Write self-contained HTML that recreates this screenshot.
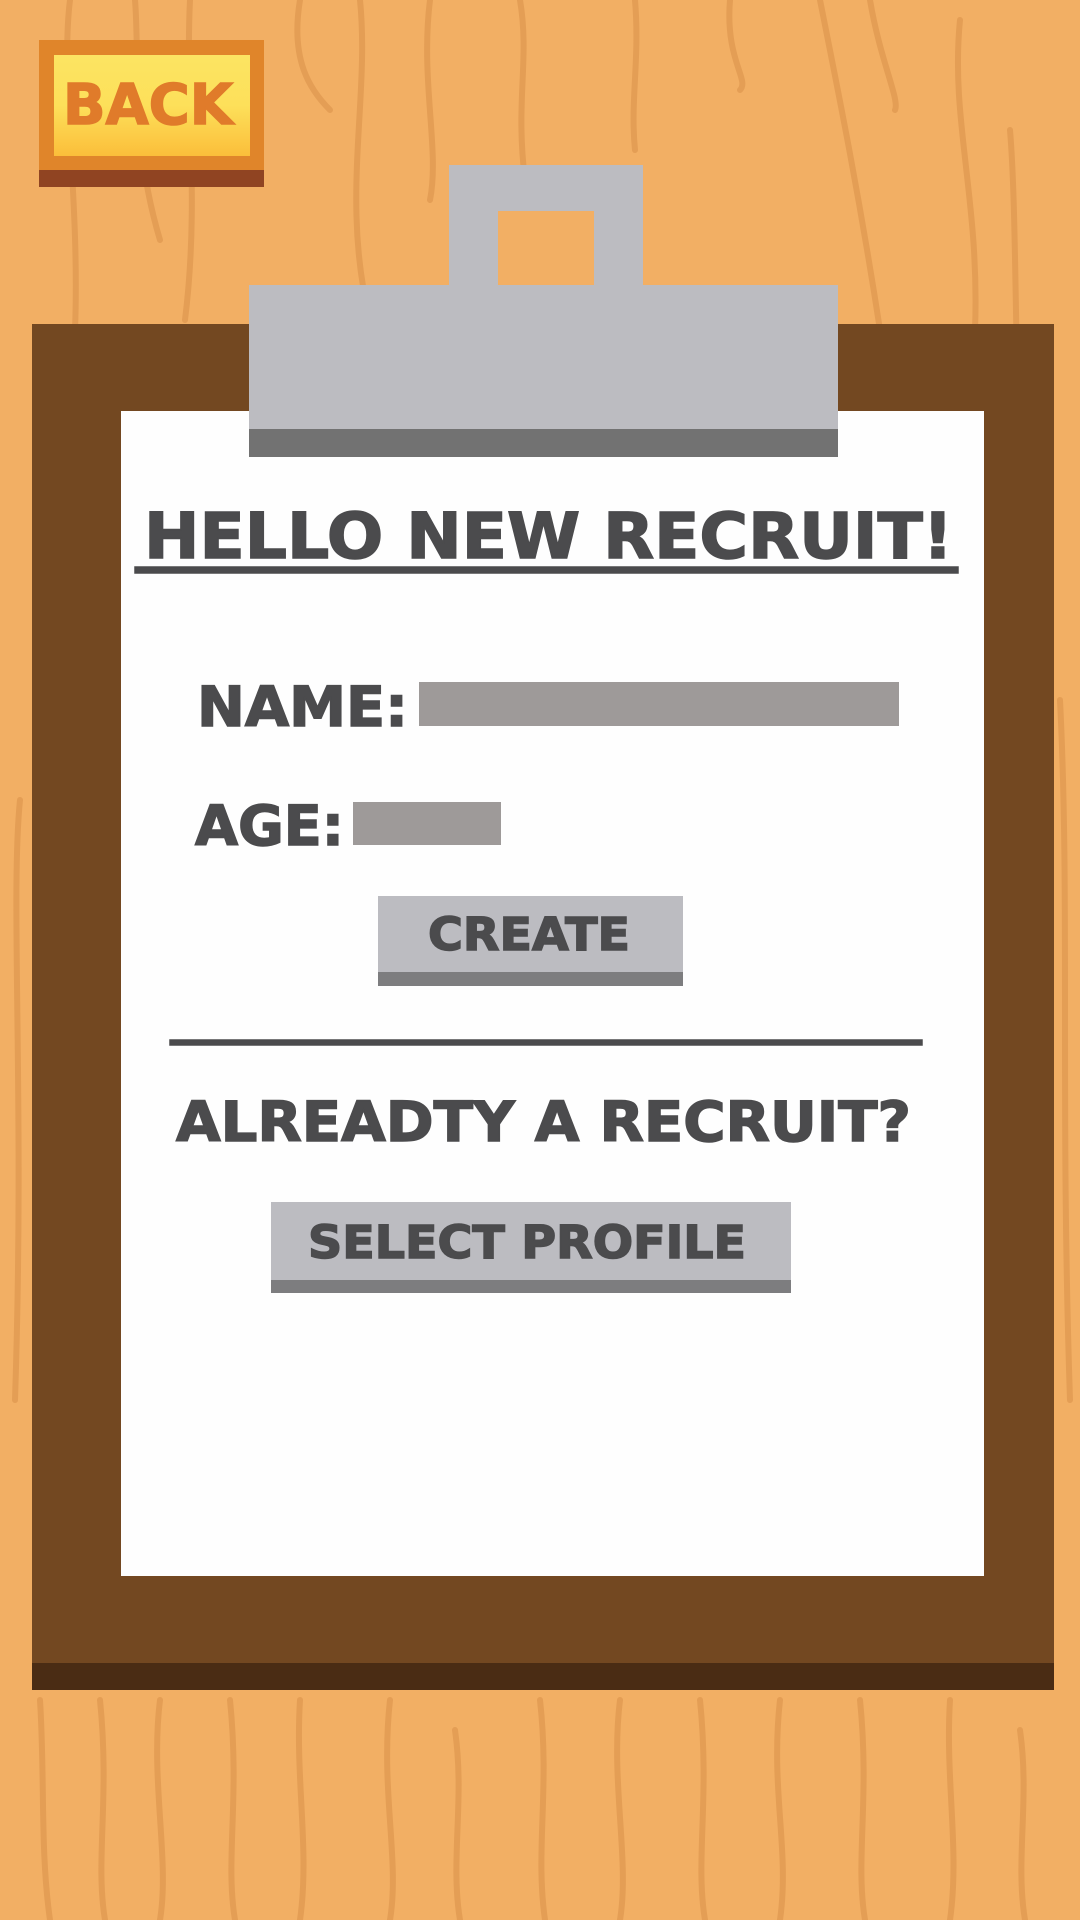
<!DOCTYPE html>
<html><head><meta charset="utf-8"><style>
html,body{margin:0;padding:0;width:1080px;height:1920px;overflow:hidden;background:#F2AF64}
svg{display:block}
text{font-family:"DejaVu Sans","Liberation Sans",sans-serif;font-weight:bold}
</style></head><body>
<svg width="1080" height="1920" viewBox="0 0 1080 1920" xmlns="http://www.w3.org/2000/svg">
<defs><linearGradient id="g" x1="0" y1="0" x2="0" y2="1"><stop offset="0" stop-color="#FCE462"/><stop offset="0.5" stop-color="#FDE05A"/><stop offset="1" stop-color="#FBBE3A"/></linearGradient></defs>
<rect width="1080" height="1920" fill="#F2AF64"/>
<g fill="none" stroke="#E49E55" stroke-width="6" stroke-linecap="round">
<path d="M70 0 C60 80 80 200 75 330"/><path d="M135 0 C140 60 130 140 160 240"/><path d="M190 0 C185 100 200 200 185 320"/>
<path d="M300 0 C290 60 310 90 330 110"/><path d="M360 0 C370 100 340 200 370 320"/><path d="M430 0 C420 80 440 150 430 200"/>
<path d="M520 0 C530 60 515 100 525 180"/><path d="M635 0 C640 60 630 100 635 150"/><path d="M730 0 C725 60 750 80 740 90"/>
<path d="M820 0 C840 100 860 200 880 330"/><path d="M870 0 C880 60 900 100 895 110"/><path d="M960 20 C950 120 980 200 975 330"/>
<path d="M1010 130 C1020 250 1010 500 1040 700"/><path d="M20 800 C10 900 25 1100 15 1400"/><path d="M1060 700 C1070 900 1060 1100 1070 1400"/>
<path d="M40 1700 C45 1780 40 1850 50 1920"/><path d="M100 1700 C110 1800 95 1860 105 1920"/><path d="M160 1700 C150 1780 170 1860 160 1920"/>
<path d="M230 1700 C240 1800 225 1860 235 1920"/><path d="M300 1700 C295 1780 310 1850 300 1920"/><path d="M390 1700 C380 1790 400 1860 390 1920"/>
<path d="M455 1730 C465 1800 450 1860 460 1920"/><path d="M540 1700 C550 1790 535 1850 545 1920"/><path d="M620 1700 C610 1780 630 1860 620 1920"/>
<path d="M700 1700 C710 1800 695 1860 705 1920"/><path d="M780 1700 C770 1790 790 1850 780 1920"/><path d="M860 1700 C870 1800 855 1860 865 1920"/>
<path d="M950 1700 C945 1780 960 1850 950 1920"/><path d="M1020 1730 C1030 1800 1015 1860 1025 1920"/>
</g>
<rect x="39" y="40" width="225" height="147" fill="#E0852A"/>
<rect x="39" y="170" width="225" height="17" fill="#904422"/>
<rect x="54" y="55" width="196" height="101" fill="url(#g)"/>
<text x="63" y="124" font-size="56" fill="#E07B2A" stroke="#E07B2A" stroke-width="1.5" textLength="170" lengthAdjust="spacingAndGlyphs">BACK</text>
<rect x="32" y="324" width="1022" height="1366" fill="#734821"/>
<rect x="32" y="1663" width="1022" height="27" fill="#4A2C14"/>
<rect x="121" y="411" width="863" height="1165" fill="#FEFEFE"/>
<path d="M449 165 H643 V285 H594 V211 H498 V285 H449 Z" fill="#BCBCC1"/>
<rect x="249" y="285" width="589" height="172" fill="#BCBCC1"/>
<rect x="249" y="429" width="589" height="28" fill="#727272"/>
<g fill="#4B4B4D" stroke="#4B4B4D" stroke-width="1.5">
<text x="144" y="558" font-size="63" textLength="809" lengthAdjust="spacingAndGlyphs">HELLO NEW RECRUIT!</text>
<rect x="135" y="567" width="823" height="6"/>
<text x="197" y="726" font-size="55" textLength="211" lengthAdjust="spacingAndGlyphs">NAME:</text>
<text x="195" y="845" font-size="55" textLength="149" lengthAdjust="spacingAndGlyphs">AGE:</text>
<rect x="170" y="1040" width="752" height="5"/>
<text x="176" y="1141" font-size="55" textLength="735" lengthAdjust="spacingAndGlyphs">ALREADTY A RECRUIT?</text>
</g>
<rect x="419" y="682" width="480" height="44" fill="#9E9A99"/>
<rect x="353" y="802" width="148" height="43" fill="#9E9A99"/>
<rect x="378" y="896" width="305" height="90" fill="#BCBCC1"/>
<rect x="378" y="972" width="305" height="14" fill="#7D7D7F"/>
<text x="428" y="950" font-size="45" fill="#4B4B4D" stroke="#4B4B4D" stroke-width="1.5" textLength="202" lengthAdjust="spacingAndGlyphs">CREATE</text>
<rect x="271" y="1202" width="520" height="91" fill="#BCBCC1"/>
<rect x="271" y="1280" width="520" height="13" fill="#7D7D7F"/>
<text x="308" y="1258" font-size="45" fill="#4B4B4D" stroke="#4B4B4D" stroke-width="1.5" textLength="438" lengthAdjust="spacingAndGlyphs">SELECT PROFILE</text>
</svg>
</body></html>
